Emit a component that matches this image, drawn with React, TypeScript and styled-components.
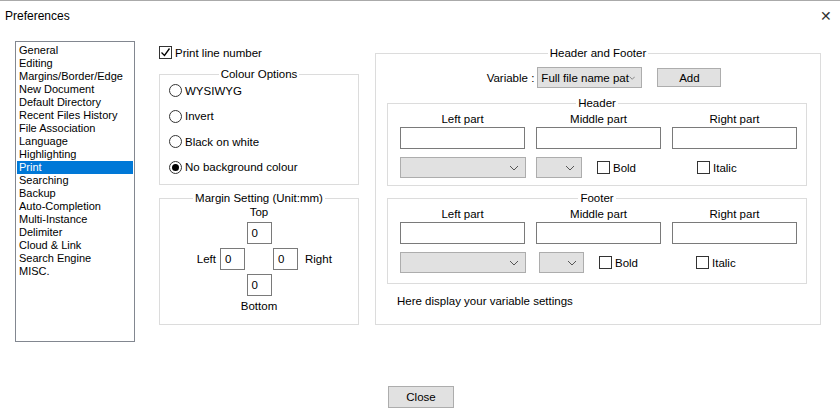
import React from "react";
import styled, { createGlobalStyle } from "styled-components";

const Global = createGlobalStyle`
  html, body { margin: 0; padding: 0; background: #fff; }
  body { font-family: "Liberation Sans", Arial, sans-serif; font-size: 12px; color: #000; }
  * { box-sizing: border-box; }
`;

const Window = styled.div`
  width: 840px; height: 408px; background: #fff; border-top: 1px solid #aaa;
  display: flex; flex-direction: column;
`;
const TitleBar = styled.div`
  height: 26px; display: flex; align-items: center; justify-content: space-between;
  padding: 4px 8px 0 5px; font-size: 12px;
`;
const CloseX = styled.span` font-size: 14px; color: #333; `;
const Body = styled.div`
  display: flex; padding: 15px 0 0 15px;
`;
const List = styled.div`
  width: 120px; height: 301px; border: 1px solid #828790; padding: 2px 1px 0 1px;
  display: flex; flex-direction: column; margin-right: 24px;
`;
const Item = styled.div<{ $sel?: boolean }>`
  height: 13px; line-height: 13px; padding-left: 2px; font-size: 11px;
  background: ${p => (p.$sel ? "#0078d7" : "transparent")};
  color: ${p => (p.$sel ? "#fff" : "#000")};
`;
const Mid = styled.div` width: 200px; display: flex; flex-direction: column; margin-right: 16px; `;
const CheckRow = styled.label`
  display: flex; align-items: center; gap: 3px; height: 13px; font-size: 11.5px; white-space: nowrap;
`;
const Box = styled.span`
  width: 13px; height: 13px; border: 1px solid #333; background: #fff;
  display: inline-flex; align-items: center; justify-content: center; flex: none;
`;
const Group = styled.fieldset<{ $h: number }>`
  margin: 0; border: 1px solid #dcdcdc; height: ${p => p.$h}px; padding: 0; min-width: 0;
  & > legend { margin: 0 auto; padding: 0 2px; font-size: 11.5px; line-height: 14px; }
`;
const RadioList = styled.div`
  display: flex; flex-direction: column; gap: 12.6px; padding: 3px 0 0 9px;
`;
const Radio = styled.span<{ $on?: boolean }>`
  width: 13px; height: 13px; border-radius: 50%; border: 1px solid #333; flex: none;
  display: inline-flex; align-items: center; justify-content: center;
  &::after { content: ""; width: 7px; height: 7px; border-radius: 50%; background: ${p => (p.$on ? "#000" : "transparent")}; }
`;
const MarginGrid = styled.div`
  display: grid; grid-template-columns: 1fr 25px 28px 25px 1fr; align-items: center;
  row-gap: 4px; padding-top: 1px; font-size: 11.5px;
`;
const Center = styled.div` grid-column: 1 / -1; display: flex; justify-content: center; `;
const LeftLbl = styled.div` grid-column: 1; text-align: right; padding-right: 4px; `;
const RightLbl = styled.div` grid-column: 5; padding-left: 7px; `;
const SmallInput = styled.div<{ $col?: number }>`
  ${p => (p.$col ? `grid-column: ${p.$col};` : "")}
  width: 25px; height: 22px; border: 1px solid #7a7a7a; padding: 4px 0 0 4px; font-size: 11.5px;
`;
const Right = styled.div` width: 446px; padding-top: 5px; `;
const VarRow = styled.div`
  display: flex; align-items: center; justify-content: center; gap: 3px; padding: 7px 0 8px 12px; font-size: 11.5px;
`;
const Combo = styled.div<{ $w: number }>`
  width: ${p => p.$w}px; height: 21px; border: 1px solid #adadad; background: #e1e1e1;
  display: flex; align-items: center; justify-content: space-between; padding: 0 6px 0 3px; font-size: 11.5px; white-space: nowrap; overflow: hidden;
`;
const Button = styled.div<{ $w: number }>`
  width: ${p => p.$w}px; height: 19px; border: 1px solid #adadad; background: #e1e1e1;
  display: flex; align-items: center; justify-content: center; font-size: 11.5px;
`;
const Inner = styled(Group)` margin: 0 13px 0 11px; padding: 0 12px; `;
const Cols = styled.div`
  display: grid; grid-template-columns: 125px 125px 125px; column-gap: 11px; justify-items: center; font-size: 11.5px;
`;
const TextBox = styled.div` width: 125px; height: 22px; border: 1px solid #7a7a7a; background: #fff; margin-top: 2px; `;
const Row = styled.div` display: flex; align-items: center; margin-top: 8px; `;
const Note = styled.div` padding: 11px 0 0 21px; font-size: 11.5px; `;
const Footer = styled.div` display: flex; justify-content: center; padding: 44px 0 0 2px; `;

const Chevron = () => (
  <svg width="10" height="6" viewBox="0 0 10 6"><path d="M1 1l4 4 4-4" fill="none" stroke="#555" strokeWidth="1" /></svg>
);
const Tick = () => (
  <svg width="11" height="11" viewBox="0 0 11 11"><path d="M1.5 5.5l3 3 5-7" fill="none" stroke="#000" strokeWidth="1.3" /></svg>
);

const items = ["General","Editing","Margins/Border/Edge","New Document","Default Directory","Recent Files History","File Association","Language","Highlighting","Print","Searching","Backup","Auto-Completion","Multi-Instance","Delimiter","Cloud & Link","Search Engine","MISC."];

const Parts = ({ title, h }: { title: string; h: number }) => (
  <Inner $h={h}>
    <legend>{title}</legend>
    <Cols style={{ marginTop: 3 }}>
      <div>Left part</div><div>Middle part</div><div>Right part</div>
      <TextBox /><TextBox /><TextBox />
    </Cols>
    <Row>
      <Combo $w={126}><span /><Chevron /></Combo>
      <Combo $w={title === "Header" ? 46 : 45} style={{ marginLeft: title === "Header" ? 10 : 13 }}><span /><Chevron /></Combo>
      <CheckRow style={{ marginLeft: 15 }}><Box />Bold</CheckRow>
      <CheckRow style={{ marginLeft: title === "Header" ? 61 : 58 }}><Box />Italic</CheckRow>
    </Row>
  </Inner>
);

export default function App() {
  return (
    <Window>
      <Global />
      <TitleBar><span>Preferences</span><CloseX>✕</CloseX></TitleBar>
      <Body>
        <List>{items.map(i => <Item key={i} $sel={i === "Print"}>{i}</Item>)}</List>
        <Mid>
          <CheckRow style={{ marginTop: 5 }}><Box><Tick /></Box>Print line number</CheckRow>
          <Group $h={118} style={{ marginTop: 8 }}>
            <legend>Colour Options</legend>
            <RadioList>
              {["WYSIWYG","Invert","Black on white","No background colour"].map((r, i) => (
                <CheckRow key={r}><Radio $on={i === 3} />{r}</CheckRow>
              ))}
            </RadioList>
          </Group>
          <Group $h={134} style={{ marginTop: 6 }}>
            <legend>Margin Setting (Unit:mm)</legend>
            <MarginGrid>
              <Center>Top</Center>
              <Center><SmallInput>0</SmallInput></Center>
              <LeftLbl>Left</LeftLbl>
              <SmallInput $col={2}>0</SmallInput>
              <SmallInput $col={4}>0</SmallInput>
              <RightLbl>Right</RightLbl>
              <Center><SmallInput>0</SmallInput></Center>
              <Center>Bottom</Center>
            </MarginGrid>
          </Group>
        </Mid>
        <Right>
          <Group $h={279}>
            <legend>Header and Footer</legend>
            <VarRow>
              <span>Variable :</span>
              <Combo $w={105}><span>Full file name pat</span><Chevron /></Combo>
              <Button $w={64} style={{ marginLeft: 12 }}>Add</Button>
            </VarRow>
            <Parts title="Header" h={90} />
            <div style={{ height: 5 }} />
            <Parts title="Footer" h={93} />
            <Note>Here display your variable settings</Note>
          </Group>
        </Right>
      </Body>
      <Footer><Button $w={66} style={{ height: 22 }}>Close</Button></Footer>
    </Window>
  );
}
